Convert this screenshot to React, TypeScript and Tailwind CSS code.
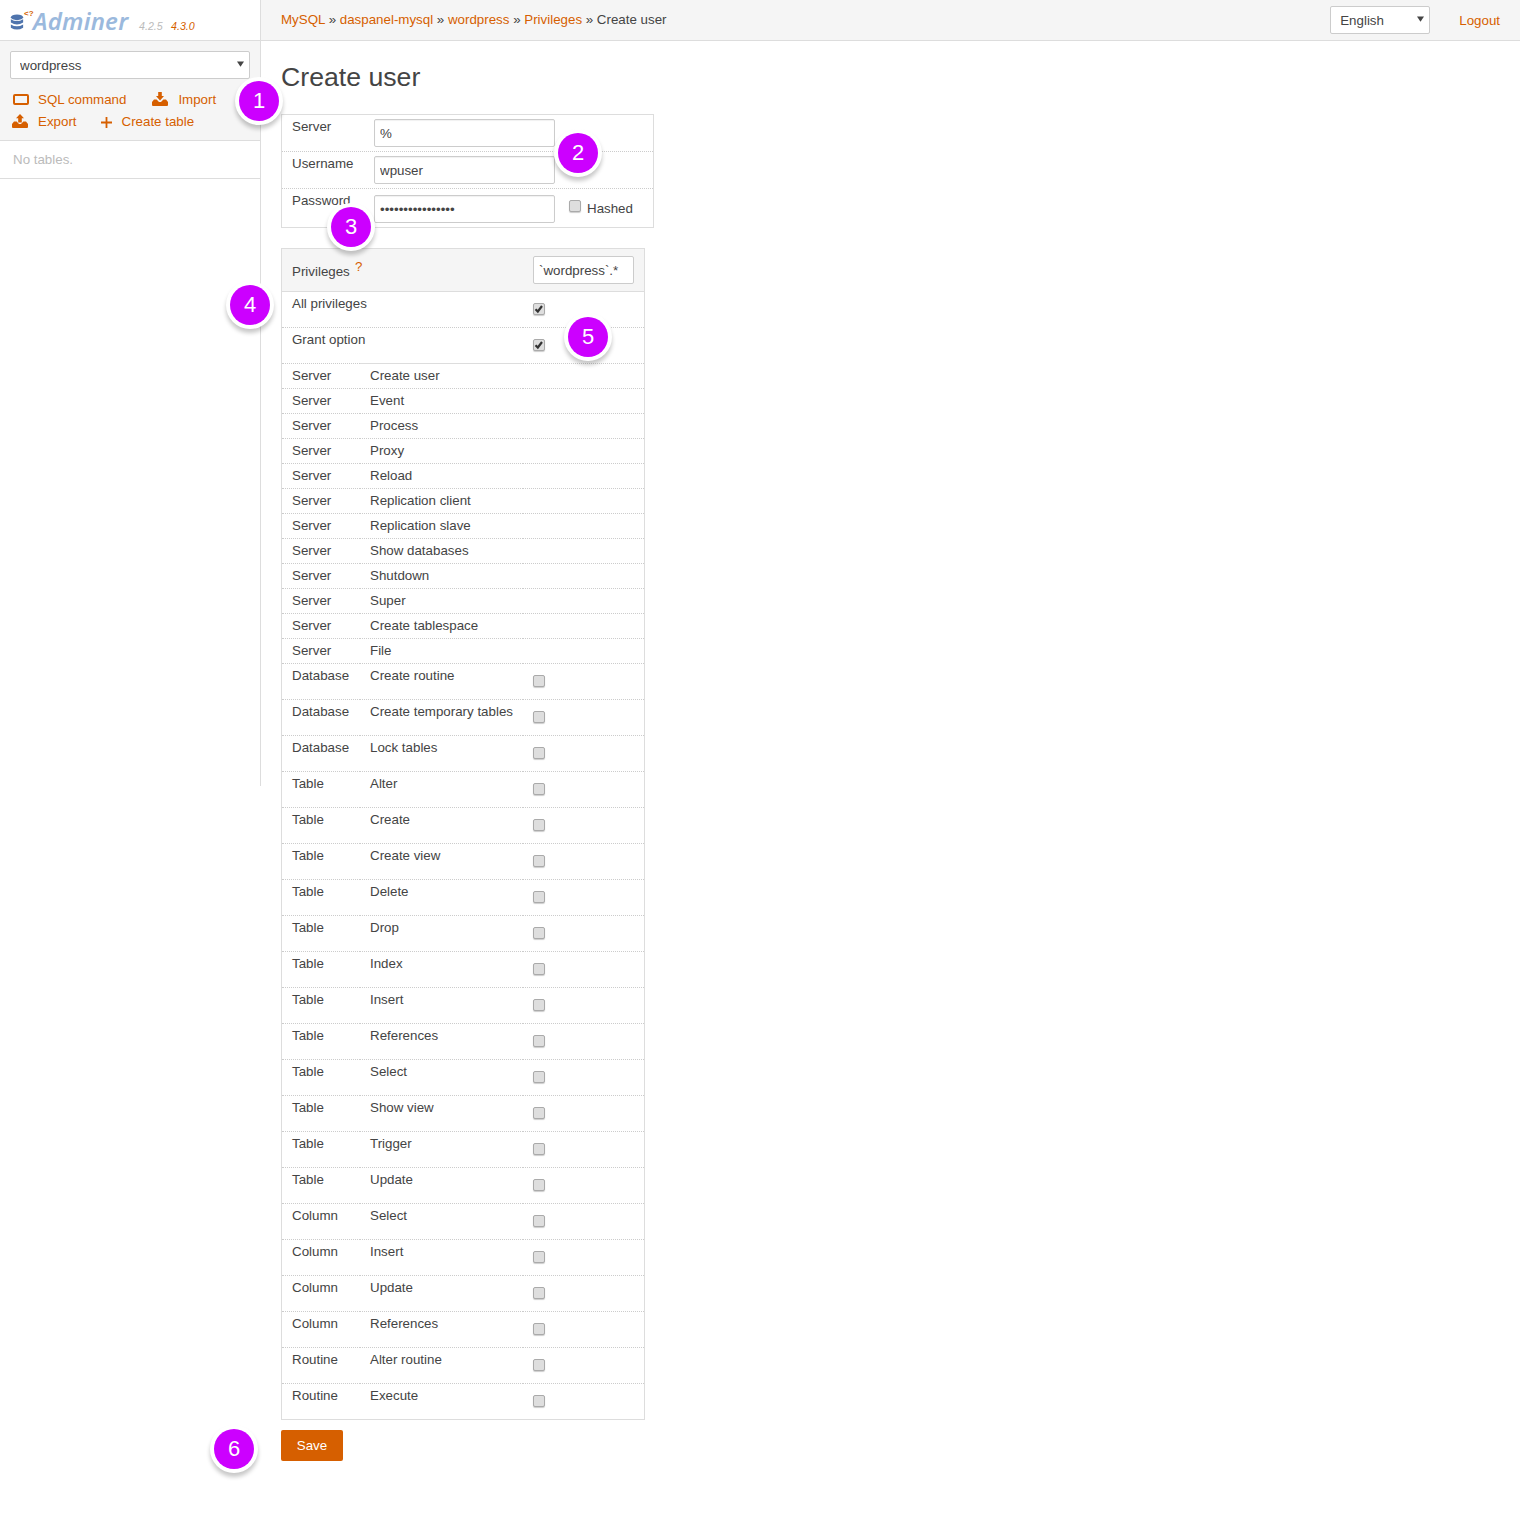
import React from "react";

const ORANGE = "text-[#d65f00]";

const server = ["Create user", "Event", "Process", "Proxy", "Reload", "Replication client", "Replication slave", "Show databases", "Shutdown", "Super", "Create tablespace", "File"];
const rest: [string, string][] = [
  ["Database", "Create routine"],
  ["Database", "Create temporary tables"],
  ["Database", "Lock tables"],
  ["Table", "Alter"],
  ["Table", "Create"],
  ["Table", "Create view"],
  ["Table", "Delete"],
  ["Table", "Drop"],
  ["Table", "Index"],
  ["Table", "Insert"],
  ["Table", "References"],
  ["Table", "Select"],
  ["Table", "Show view"],
  ["Table", "Trigger"],
  ["Table", "Update"],
  ["Column", "Select"],
  ["Column", "Insert"],
  ["Column", "Update"],
  ["Column", "References"],
  ["Routine", "Alter routine"],
  ["Routine", "Execute"],
];

function Box({ on }: { on?: boolean }) {
  return (
    <span className="relative block h-[12px] w-[12px] rounded-[2px] border border-[#aaa] bg-[#dedede] shadow-[0_1px_1px_rgba(0,0,0,0.2)]">
      {on && (
        <svg viewBox="0 0 12 12" className="absolute left-[0px] top-[0px] h-[10px] w-[10px]">
          <path d="M1.8 6.2 L4.6 9 L9.6 2.4" fill="none" stroke="#333" strokeWidth="2.6" />
        </svg>
      )}
    </span>
  );
}

function Bubble({ n, x, y }: { n: number; x: number; y: number }) {
  return (
    <div
      className="absolute flex h-[40px] w-[40px] items-center justify-center rounded-full bg-[#cc00ff] text-[22px] leading-none text-white shadow-[0_0_0_4px_#ffffff,0_4px_4px_4px_rgba(0,0,0,0.22)]"
      style={{ left: x - 20, top: y - 20 }}
    >
      {n}
    </div>
  );
}

function Arrow() {
  return (
    <svg viewBox="0 0 8 6" className="pointer-events-none absolute right-[6px] top-1/2 h-[6px] w-[7px] -translate-y-[4px]">
      <path d="M0 0 H8 L4 6 Z" fill="#444" />
    </svg>
  );
}

function Tray({ up }: { up?: boolean }) {
  return (
    <svg viewBox="0 0 16 14" className="h-[14px] w-[16px] -translate-y-[1px]">
      <path d="M0 10 L2 7.5 H4.6 L7 10 H9 L11.4 7.5 H14 L16 10 V13 Q16 14 15 14 H1 Q0 14 0 13 Z" fill="#d65f00" />
      {up ? (
        <path d="M8 0 L12 4.2 H9.8 V8.4 H6.2 V4.2 H4 Z" fill="#d65f00" />
      ) : (
        <path d="M6.2 0 H9.8 V4 H12 L8 8.4 L4 4 H6.2 Z" fill="#d65f00" />
      )}
    </svg>
  );
}

function PrivRow({ a, b, tall, box, solidMid, last }: { a: string; b?: string; tall?: boolean; box?: "on" | "off"; solidMid?: boolean; last?: boolean }) {
  const h = last ? "h-[35px]" : tall ? "h-[36px]" : "h-[25px]";
  const cell = last ? "" : "border-b border-dotted border-[#ccc]";
  return (
    <div className={`flex ${h}`}>
      <div className={`${cell} w-[78px] shrink-0 pl-[10px] pt-[3px] whitespace-nowrap`}>{a}</div>
      <div className={`${solidMid ? "border-b border-solid border-[#ddd]" : cell} w-[163px] shrink-0 pl-[10px] pt-[3px] whitespace-nowrap`}>{b}</div>
      <div className={`${cell} flex-1 pl-[10px] pt-[11px]`}>{box && <Box on={box === "on"} />}</div>
    </div>
  );
}

function FormRow({ label, children, pad, border }: { label: string; children: React.ReactNode; pad: string; border?: boolean }) {
  return (
    <div className={`flex ${border ? "border-b border-dotted border-[#ccc]" : ""}`}>
      <div className="w-[92px] shrink-0 pl-[10px] pt-[3px]">{label}</div>
      <div className={`flex items-center ${pad}`}>{children}</div>
    </div>
  );
}

const inputCls =
  "h-[28px] w-[181px] rounded-[2px] border border-[#ccc] bg-white px-[5px] text-[13.333px] text-[#444] shadow-[inset_0_1px_1px_rgba(0,0,0,0.06)] outline-none";

export default function App() {
  return (
    <div className="relative flex min-h-[1516px] bg-white font-['Liberation_Sans',Arial,sans-serif] text-[13.333px] leading-[18px] text-[#444]">
      <aside className="h-[786px] w-[261px] shrink-0 border-r border-[#ddd]">
        <div className="flex h-[41px] items-start border-b border-[#ddd] bg-white pl-[10px]">
          <svg viewBox="0 0 14 18" className="mt-[14px] h-[17px] w-[14px] shrink-0">
            <ellipse cx="7" cy="3.5" rx="6.5" ry="3" fill="#4f74ad" />
            <path d="M0.5 5.5 Q7 9.5 13.5 5.5 V9 Q7 13 0.5 9 Z" fill="#4f74ad" />
            <path d="M0.5 11 Q7 15 13.5 11 V14.5 Q7 18.5 0.5 14.5 Z" fill="#4f74ad" />
          </svg>
          <span className="mt-[8px] w-[9px] shrink-0 whitespace-nowrap text-[8px] font-bold leading-[12px] text-[#d65f00]">
            {"<?"}
          </span>
          <span className="mt-[5px] w-[106px] shrink-0 whitespace-nowrap font-['Noto_Sans',sans-serif] text-[24px] font-semibold italic leading-[32px] tracking-[0.2px] text-[#9bb9dd]">
            Adminer
          </span>
          <span className="mt-[18px] w-[32px] shrink-0 text-[10.667px] italic leading-[16px] text-[#bbb]">4.2.5</span>
          <span className={`mt-[18px] text-[10.667px] italic leading-[16px] ${ORANGE}`}>4.3.0</span>
        </div>
        <div className="h-[100px] border-b border-[#ddd] bg-[#f5f5f5] px-[10px] pt-[10px]">
          <div className="relative">
            <select className="h-[28px] w-full appearance-none rounded-[2px] border border-[#ccc] bg-white pl-[9px] pt-[2px] text-[13.333px] text-[#444] outline-none">
              <option>wordpress</option>
            </select>
            <Arrow />
          </div>
          <div className={`mt-[10px] flex h-[22px] items-center pl-[3px] ${ORANGE}`}>
            <span className="flex w-[25px] -translate-y-[1px] items-center">
              <span className="block h-[11px] w-[16px] rounded-[2px] border-2 border-[#d65f00]" />
            </span>
            <span>SQL command</span>
            <span className="ml-[26px] flex w-[26px] items-center"><Tray /></span>
            <span>Import</span>
          </div>
          <div className={`flex h-[22px] items-center pl-[2px] ${ORANGE}`}>
            <span className="flex w-[26px] items-center"><Tray up /></span>
            <span>Export</span>
            <span className="ml-[24px] flex w-[21px] items-center">
              <svg viewBox="0 0 11 11" className="h-[11px] w-[11px]">
                <path d="M4.6 0 H6.4 V4.6 H11 V6.4 H6.4 V11 H4.6 V6.4 H0 V4.6 H4.6 Z" fill="#d65f00" />
              </svg>
            </span>
            <span>Create table</span>
          </div>
        </div>
        <div className="h-[38px] border-b border-[#ddd] pl-[13px] pt-[10px] text-[#bbb]">No tables.</div>
      </aside>

      <div className="min-w-0 flex-1">
        <header className="flex h-[41px] items-center border-b border-[#ddd] bg-[#f5f5f5] pl-[20px] pr-[20px]">
          <div>
            <span className={ORANGE}>MySQL</span> » <span className={ORANGE}>daspanel-mysql</span> »{" "}
            <span className={ORANGE}>wordpress</span> » <span className={ORANGE}>Privileges</span> » Create user
          </div>
          <div className="relative ml-auto">
            <select className="h-[28px] w-[100px] appearance-none rounded-[2px] border border-[#ccc] bg-white pl-[9px] pt-[2px] text-[13.333px] text-[#444] outline-none">
              <option>English</option>
            </select>
            <Arrow />
          </div>
          <span className={`ml-[29px] translate-y-[1px] ${ORANGE}`}>Logout</span>
        </header>

        <main className="px-[20px]">
          <h1 className="mt-[20px] text-[26.667px] font-normal leading-[32px] text-[#444]">Create user</h1>

          <div className="mt-[21px] w-[373px] border border-[#ddd]">
            <FormRow label="Server" pad="pt-[4px] pb-[4px]" border>
              <input readOnly value="%" className={inputCls} />
            </FormRow>
            <FormRow label="Username" pad="pt-[4px] pb-[4px]" border>
              <input readOnly value="wpuser" className={inputCls} />
            </FormRow>
            <FormRow label="Password" pad="pt-[6px] pb-[4px]">
              <input readOnly type="password" value="wordpresspasswd1" className={inputCls} />
              <span className="ml-[14px] -mt-[6px]"><Box /></span>
              <span className="ml-[6px]">Hashed</span>
            </FormRow>
          </div>

          <div className="mt-[20px] w-[364px] border border-[#ddd]">
            <div className="flex h-[43px] items-center border-b border-[#ddd] bg-[#f5f5f5] pl-[10px]">
              <span className="relative w-[241px] shrink-0 pt-[4px]">
                Privileges
                <span className={`absolute left-[63px] top-[1px] text-[13.333px] leading-[14px] ${ORANGE}`}>?</span>
              </span>
              <input readOnly value="`wordpress`.*" className="h-[28px] w-[101px] rounded-[2px] border border-[#ccc] bg-white px-[5px] text-[13.333px] text-[#444] outline-none" />
            </div>
            <PrivRow a="All privileges" tall box="on" />
            <PrivRow a="Grant option" tall box="on" solidMid />
            {server.map((s) => (
              <PrivRow key={s} a="Server" b={s} />
            ))}
            {rest.map(([a, b], i) => (
              <PrivRow key={a + b} a={a} b={b} tall box="off" last={i === rest.length - 1} />
            ))}
          </div>

          <button className="mt-[10px] block h-[31px] w-[62px] rounded-[2px] bg-[#d65f00] text-[13.333px] text-white">Save</button>
        </main>
      </div>

      <Bubble n={1} x={259} y={101} />
      <Bubble n={2} x={578} y={153} />
      <Bubble n={3} x={351} y={227} />
      <Bubble n={4} x={250} y={305} />
      <Bubble n={5} x={588} y={337} />
      <Bubble n={6} x={234} y={1449} />
    </div>
  );
}
